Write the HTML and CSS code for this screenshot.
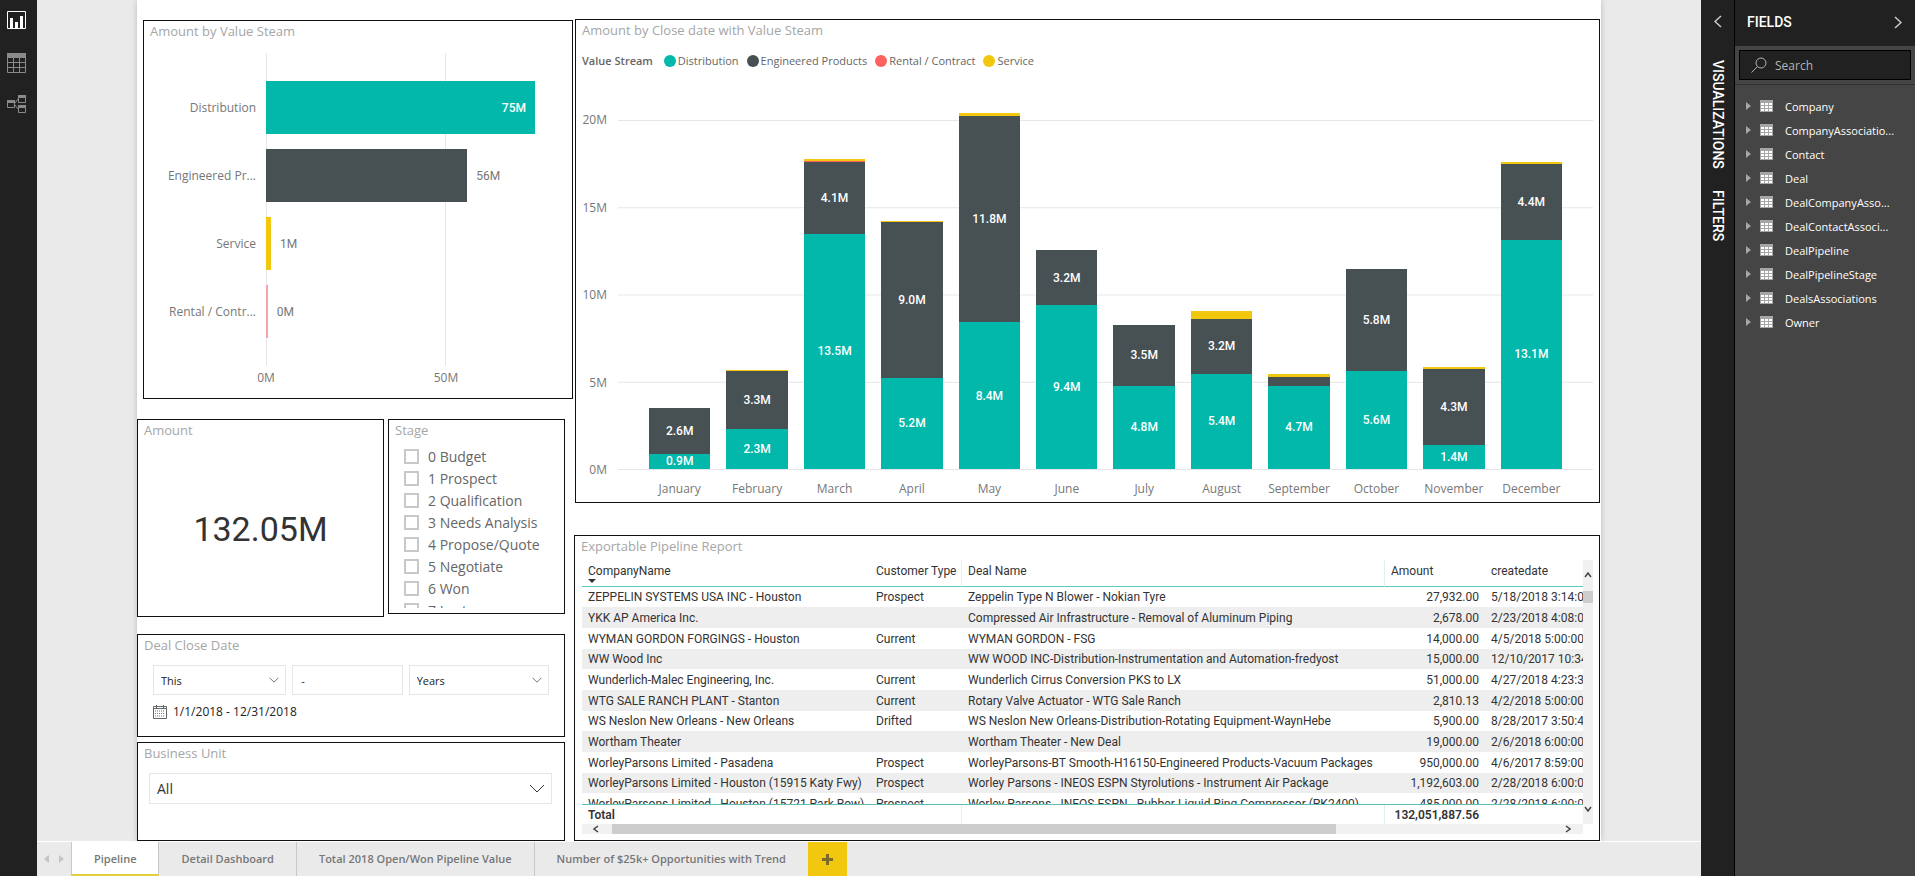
FILE: index.html
```html
<!DOCTYPE html>
<html lang="en">
<head>
	<meta charset="utf-8">
	<title>Pipeline</title>
	<link rel="stylesheet" href="styles.css">
</head>
<body>
<svg class="defs" width="0" height="0">
	<symbol id="down" viewBox="0 0 16 9"><path d="M1 1l7 7 7-7" fill="none" stroke="currentColor"/></symbol>
	<symbol id="table" viewBox="0 0 13 12">
		<path d="M0 0h13v12H0z" fill="#a6a6a6"/>
		<path d="M1 3h3v2H1zM5 3h3v2H5zM9 3h3v2H9zM1 6h3v2H1zM5 6h3v2H5zM9 6h3v2H9zM1 9h3v2H1zM5 9h3v2H5zM9 9h3v2H9z" fill="#fff"/>
	</symbol>
</svg>

<div class="app">
	<nav class="rail">
		<a href="#report" class="active" aria-label="Report">
			<svg width="20" height="19" viewBox="0 0 20 19"><path d="M.5.5h18v17H.5z" fill="none" stroke="currentColor"/><path d="M3 7h3v11H3zM8 11h3v7H8zM13 5h3v13h-3z" fill="currentColor"/></svg>
		</a>
		<a href="#data" aria-label="Data">
			<svg width="20" height="20" viewBox="0 0 20 20"><path d="M0 0h19v5H0z" fill="currentColor"/><path d="M.5 4v15.500h18V4M.5 9.500h18M.5 14.500h18M6.500 5v14M12.500 5v14" fill="none" stroke="currentColor"/></svg>
		</a>
		<a href="#model" aria-label="Relationships">
			<svg width="20" height="19" viewBox="0 0 20 19"><path d="M.5 5.500h7v7h-7zM11.500.5h7v7h-7zM11.500 10.500h7v7h-7zM8 8l3-4M8 10l3 4" fill="none" stroke="currentColor"/><path d="M0 5h8v3H0zM11 0h8v3h-8zM11 10h8v3h-8z" fill="currentColor"/></svg>
		</a>
	</nav>

	<main class="main">
		<div class="canvas">
			<div class="page">
				<div class="left">
					<section class="card by-stream">
						<h2>Amount by Value Steam</h2>
						<div class="bar-chart">
							<div class="categories">
								<span>Distribution</span>
								<span>Engineered Pr...</span>
								<span>Service</span>
								<span>Rental / Contr...</span>
							</div>
							<div class="bar-plot">
								<div class="row"><div class="bar dist" style="width: 93.4%">75M</div></div>
								<div class="row"><div class="bar eng" style="width: 69.9%"></div><span>56M</span></div>
								<div class="row"><div class="bar serv" style="width: 1.7%"></div><span>1M</span></div>
								<div class="row"><div class="bar rent-light" style="width: 0.6%"></div><span>0M</span></div>
							</div>
							<div class="bar-axis"><span>0M</span><span>50M</span></div>
						</div>
					</section>

					<div class="pair">
						<section class="card amount">
							<h2>Amount</h2>
							<p>132.05M</p>
						</section>
						<section class="card stage">
							<h2>Stage</h2>
							<div class="stages">
								<label><input type="checkbox">0 Budget</label>
								<label><input type="checkbox">1 Prospect</label>
								<label><input type="checkbox">2 Qualification</label>
								<label><input type="checkbox">3 Needs Analysis</label>
								<label><input type="checkbox">4 Propose/Quote</label>
								<label><input type="checkbox">5 Negotiate</label>
								<label><input type="checkbox">6 Won</label>
								<label><input type="checkbox">7 Lost</label>
							</div>
						</section>
					</div>

					<section class="card close-date">
						<h2>Deal Close Date</h2>
						<div class="date-row">
							<div class="select">
								<select aria-label="Period"><option>This</option><option>Last</option><option>Next</option></select>
								<svg width="10" height="6"><use href="#down"/></svg>
							</div>
							<input type="text" value="-" aria-label="Count">
							<div class="select">
								<select aria-label="Unit"><option>Years</option><option>Months</option><option>Days</option></select>
								<svg width="10" height="6"><use href="#down"/></svg>
							</div>
						</div>
						<div class="range">
							<svg width="14" height="14" viewBox="0 0 14 14"><path d="M.5 1.500h13v12H.5zM0 3.500h14M3.500 0v3M10.500 0v3" fill="none" stroke="#666"/><path d="M2 6h10M2 8.500h10M2 11h10" stroke="#777" stroke-dasharray="1 1"/></svg>
							<span>1/1/2018 - 12/31/2018</span>
						</div>
					</section>

					<section class="card unit">
						<h2>Business Unit</h2>
						<div class="select">
							<select aria-label="Business Unit"><option>All</option></select>
							<svg width="16" height="9"><use href="#down"/></svg>
						</div>
					</section>
				</div>

				<div class="right">
					<section class="card by-date">
						<h2>Amount by Close date with Value Steam</h2>
						<div class="legend">
							<b>Value Stream</b>
							<span><i class="dist"></i>Distribution</span>
							<span><i class="eng"></i>Engineered Products</span>
							<span><i class="rent"></i>Rental / Contract</span>
							<span><i class="serv"></i>Service</span>
						</div>
						<div class="column-chart">
							<div class="y-axis"><span>20M</span><span>15M</span><span>10M</span><span>5M</span><span>0M</span></div>
							<div class="column-plot">
								<div class="col">
									<div class="eng" style="height: 13.05%">2.6M</div>
									<div class="dist" style="height: 4.4%">0.9M</div>
								</div>
								<div class="col">
									<div class="serv" style="height: 0.5%"></div>
									<div class="eng" style="height: 16.4%">3.3M</div>
									<div class="dist" style="height: 11.6%">2.3M</div>
								</div>
								<div class="col">
									<div class="serv" style="height: 0.55%"></div>
									<div class="rent" style="height: 0.25%"></div>
									<div class="eng" style="height: 20.6%">4.1M</div>
									<div class="dist" style="height: 67.4%">13.5M</div>
								</div>
								<div class="col">
									<div class="serv" style="height: 0.2%"></div>
									<div class="eng" style="height: 44.75%">9.0M</div>
									<div class="dist" style="height: 26.15%">5.2M</div>
								</div>
								<div class="col">
									<div class="serv" style="height: 0.75%"></div>
									<div class="eng" style="height: 59.1%">11.8M</div>
									<div class="dist" style="height: 42.1%">8.4M</div>
								</div>
								<div class="col">
									<div class="serv" style="height: 0.15%"></div>
									<div class="eng" style="height: 15.7%">3.2M</div>
									<div class="dist" style="height: 46.95%">9.4M</div>
								</div>
								<div class="col">
									<div class="eng" style="height: 17.45%">3.5M</div>
									<div class="dist" style="height: 23.85%">4.8M</div>
								</div>
								<div class="col">
									<div class="serv" style="height: 2.3%"></div>
									<div class="eng" style="height: 15.75%">3.2M</div>
									<div class="dist" style="height: 27.3%">5.4M</div>
								</div>
								<div class="col">
									<div class="serv" style="height: 0.8%"></div>
									<div class="eng" style="height: 2.6%"></div>
									<div class="dist" style="height: 23.8%">4.7M</div>
								</div>
								<div class="col">
									<div class="eng" style="height: 29.1%">5.8M</div>
									<div class="dist" style="height: 28.15%">5.6M</div>
								</div>
								<div class="col">
									<div class="serv" style="height: 0.75%"></div>
									<div class="eng" style="height: 21.55%">4.3M</div>
									<div class="dist" style="height: 7%">1.4M</div>
								</div>
								<div class="col">
									<div class="serv" style="height: 0.55%"></div>
									<div class="eng" style="height: 21.85%">4.4M</div>
									<div class="dist" style="height: 65.65%">13.1M</div>
								</div>
							</div>
							<div class="months">
								<span>January</span><span>February</span><span>March</span><span>April</span><span>May</span><span>June</span>
								<span>July</span><span>August</span><span>September</span><span>October</span><span>November</span><span>December</span>
							</div>
						</div>
					</section>

					<section class="card report">
						<h2>Exportable Pipeline Report</h2>
						<div class="grid">
							<div class="grid-body">
								<div class="rows">
									<table>
										<colgroup><col class="c-company"><col class="c-type"><col class="c-deal"><col class="c-amount"><col class="c-created"></colgroup>
										<thead>
											<tr><th>CompanyName<i class="sort"></i></th><th>Customer Type</th><th>Deal Name</th><th>Amount</th><th>createdate</th></tr>
										</thead>
										<tbody>
											<tr><td>ZEPPELIN SYSTEMS USA INC - Houston</td><td>Prospect</td><td>Zeppelin Type N Blower - Nokian Tyre</td><td>27,932.00</td><td>5/18/2018 3:14:01 PM</td></tr>
											<tr><td>YKK AP America Inc.</td><td></td><td>Compressed Air Infrastructure - Removal of Aluminum Piping</td><td>2,678.00</td><td>2/23/2018 4:08:08 PM</td></tr>
											<tr><td>WYMAN GORDON FORGINGS - Houston</td><td>Current</td><td>WYMAN GORDON - FSG</td><td>14,000.00</td><td>4/5/2018 5:00:00</td></tr>
											<tr><td>WW Wood Inc</td><td></td><td>WW WOOD INC-Distribution-Instrumentation and Automation-fredyost</td><td>15,000.00</td><td>12/10/2017 10:34</td></tr>
											<tr><td>Wunderlich-Malec Engineering, Inc.</td><td>Current</td><td>Wunderlich Cirrus Conversion PKS to LX</td><td>51,000.00</td><td>4/27/2018 4:23:31 PM</td></tr>
											<tr><td>WTG SALE RANCH PLANT - Stanton</td><td>Current</td><td>Rotary Valve Actuator - WTG Sale Ranch</td><td>2,810.13</td><td>4/2/2018 5:00:00</td></tr>
											<tr><td>WS Neslon New Orleans - New Orleans</td><td>Drifted</td><td>WS Neslon New Orleans-Distribution-Rotating Equipment-WaynHebe</td><td>5,900.00</td><td>8/28/2017 3:50:48 PM</td></tr>
											<tr><td>Wortham Theater</td><td></td><td>Wortham Theater - New Deal</td><td>19,000.00</td><td>2/6/2018 6:00:00</td></tr>
											<tr><td>WorleyParsons Limited - Pasadena</td><td>Prospect</td><td>WorleyParsons-BT Smooth-H16150-Engineered Products-Vacuum Packages</td><td>950,000.00</td><td>4/6/2017 8:59:00</td></tr>
											<tr><td>WorleyParsons Limited - Houston (15915 Katy Fwy)</td><td>Prospect</td><td>Worley Parsons - INEOS ESPN Styrolutions - Instrument Air Package</td><td>1,192,603.00</td><td>2/28/2018 6:00:00</td></tr>
											<tr><td>WorleyParsons Limited - Houston (15721 Park Row)</td><td>Prospect</td><td>Worley Parsons - INEOS ESPN - Rubber-Liquid Ring Compressor (PK2400)</td><td>485,000.00</td><td>2/28/2018 6:00:00</td></tr>
										</tbody>
									</table>
								</div>
								<div class="total">
									<table>
										<colgroup><col class="c-company"><col class="c-type"><col class="c-deal"><col class="c-amount"><col class="c-created"></colgroup>
										<tbody><tr><td>Total</td><td></td><td></td><td>132,051,887.56</td><td></td></tr></tbody>
									</table>
								</div>
							</div>
							<div class="vscroll">
								<svg width="8" height="6" viewBox="0 0 8 6"><path d="M1 5l3-4 3 4" fill="none" stroke="#444" stroke-width="1.500"/></svg>
								<div class="thumb"></div>
								<svg width="8" height="6" viewBox="0 0 8 6"><path d="M1 1l3 4 3-4" fill="none" stroke="#444" stroke-width="1.500"/></svg>
							</div>
							<div class="hscroll">
								<svg width="6" height="8" viewBox="0 0 6 8"><path d="M5 1L1 4l4 3" fill="none" stroke="#444" stroke-width="1.500"/></svg>
								<div class="track"><div class="thumb"></div></div>
								<svg width="6" height="8" viewBox="0 0 6 8"><path d="M1 1l4 3-4 3" fill="none" stroke="#444" stroke-width="1.500"/></svg>
							</div>
						</div>
					</section>
				</div>
			</div>
		</div>

		<nav class="tabs">
			<div class="arrows">
				<svg width="5" height="8" viewBox="0 0 5 8"><path d="M5 0v8L0 4z" fill="#c4c4c4"/></svg>
				<svg width="5" height="8" viewBox="0 0 5 8"><path d="M0 0v8l5-4z" fill="#c4c4c4"/></svg>
			</div>
			<a href="#pipeline" class="active">Pipeline</a>
			<a href="#detail">Detail Dashboard</a>
			<a href="#total">Total 2018 Open/Won Pipeline Value</a>
			<a href="#number">Number of $25k+ Opportunities with Trend</a>
			<button type="button" aria-label="New page">
				<svg width="11" height="11" viewBox="0 0 11 11"><path d="M4 0h3v4h4v3H7v4H4V7H0V4h4z" fill="#7a6a2c"/></svg>
			</button>
		</nav>
	</main>

	<aside class="collapsed">
		<button type="button" aria-label="Expand"><svg width="8" height="13" viewBox="0 0 8 13"><path d="M7 1L1 6.500 7 12" fill="none" stroke="currentColor" stroke-width="1.500"/></svg></button>
		<span>VISUALIZATIONS</span>
		<span>FILTERS</span>
	</aside>

	<aside class="fields">
		<header>
			<h1>FIELDS</h1>
			<button type="button" aria-label="Collapse"><svg width="8" height="13" viewBox="0 0 8 13"><path d="M1 1l6 5.500L1 12" fill="none" stroke="currentColor" stroke-width="1.500"/></svg></button>
		</header>
		<div class="search">
			<label>
				<svg width="16" height="16" viewBox="0 0 16 16"><circle cx="10" cy="6" r="5" fill="none" stroke="currentColor"/><path d="M6.500 9.500L.5 15.500" stroke="currentColor"/></svg>
				<input type="text" placeholder="Search" aria-label="Search">
			</label>
		</div>
		<ul>
			<li><i></i><svg width="13" height="12"><use href="#table"/></svg>Company</li>
			<li><i></i><svg width="13" height="12"><use href="#table"/></svg>CompanyAssociatio...</li>
			<li><i></i><svg width="13" height="12"><use href="#table"/></svg>Contact</li>
			<li><i></i><svg width="13" height="12"><use href="#table"/></svg>Deal</li>
			<li><i></i><svg width="13" height="12"><use href="#table"/></svg>DealCompanyAsso...</li>
			<li><i></i><svg width="13" height="12"><use href="#table"/></svg>DealContactAssoci...</li>
			<li><i></i><svg width="13" height="12"><use href="#table"/></svg>DealPipeline</li>
			<li><i></i><svg width="13" height="12"><use href="#table"/></svg>DealPipelineStage</li>
			<li><i></i><svg width="13" height="12"><use href="#table"/></svg>DealsAssociations</li>
			<li><i></i><svg width="13" height="12"><use href="#table"/></svg>Owner</li>
		</ul>
	</aside>
</div>
</body>
</html>
```
FILE: styles.css
```css
* {
	box-sizing: border-box;
}

body {
	margin: 0;
	font-family: "Open Sans", "Noto Sans", sans-serif;
	font-size: 12px;
	color: #333;
}

h1, h2, p, ul {
	margin: 0;
	padding: 0;
}

svg {
	display: block;
	flex: none;
}

button, input, select {
	font: inherit;
	color: inherit;
	margin: 0;
	padding: 0;
	border: 0;
	border-radius: 0;
	background: none;
}

.defs {
	position: absolute;
}

.app {
	display: flex;
	min-height: 100vh;
}

/* left rail */
.rail {
	flex: none;
	width: 37px;
	padding: 11px 0 0 7px;
	background: #212121;
}

.rail a {
	display: block;
	height: 42px;
	color: #8a8a8a;
}

.rail a.active {
	color: #fff;
}

.main {
	flex: 1;
	min-width: 0;
	display: flex;
	flex-direction: column;
	background: #eaeaea;
}

.canvas {
	flex: 1;
	display: flex;
	padding: 0 100px;
	border-bottom: 1px solid #fff;
	overflow: hidden;
}

.page {
	flex: 1;
	min-width: 0;
	display: grid;
	grid-template-columns: 436fr 1026fr;
	gap: 1px;
	padding: 19px 1px 0 0;
	background: #fff;
	box-shadow: 0 0 6px rgba(0, 0, 0, 0.2);
}

.left, .right {
	display: flex;
	flex-direction: column;
	min-width: 0;
}

/* cards */
.card {
	border: 1px solid #111;
	background: #fff;
	min-width: 0;
}

.card h2 {
	padding: 0 6px 1px;
	font-size: 13px;
	font-weight: 400;
	line-height: 20px;
	color: #a6a6a6;
}

.dist { background: #01b8aa; }
.eng { background: #475053; }
.rent { background: #fd625e; }
.rent-light { background: #f5a3a8; }
.serv { background: #f2c80f; }

/* amount by value stream */
.by-stream {
	margin: 1px 0 20px 6px;
	padding-bottom: 12px;
}

.bar-chart {
	display: grid;
	grid-template-columns: 112px 1fr;
	column-gap: 10px;
	padding: 11px 18px 0 0;
	color: #777;
}

.categories, .bar-plot {
	display: grid;
	grid-auto-rows: 53px;
	gap: 15px;
	padding: 28px 0;
}

.categories {
	line-height: 54px;
	text-align: right;
	white-space: nowrap;
}

.bar-plot {
	background:
		linear-gradient(#e6e6e6, #e6e6e6) 0 0 / 1px 100% no-repeat,
		linear-gradient(#e6e6e6, #e6e6e6) 62.5% 0 / 1px 100% no-repeat;
	font-family: Roboto, sans-serif;
}

.row {
	display: flex;
	gap: 9px;
	line-height: 54px;
	white-space: nowrap;
}

.bar {
	flex: none;
	padding-right: 9px;
	color: #fff;
	font-weight: 500;
	text-align: right;
}

.bar:empty {
	padding: 0;
}

.bar-axis {
	grid-column: 2;
	display: grid;
	grid-template-columns: 62.5% 1fr;
	padding-top: 4px;
	line-height: 16px;
}

.bar-axis span {
	width: 40px;
	margin-left: -20px;
	text-align: center;
}

/* amount + stage */
.pair {
	display: grid;
	grid-template-columns: 247fr 177fr;
	gap: 4px;
	margin: 0 8px 17px 0;
}

.amount {
	display: flex;
	flex-direction: column;
}

.amount p {
	flex: 1;
	display: flex;
	align-items: center;
	justify-content: center;
	font-family: Roboto, sans-serif;
	font-size: 34px;
}

.stage {
	margin-bottom: 3px;
	padding-bottom: 5px;
}

.stages {
	height: 163px;
	margin: 4px 0 0 15px;
	overflow: hidden;
	font-size: 14px;
	color: #666;
}

.stages label {
	display: flex;
	align-items: center;
	gap: 9px;
	height: 22px;
	white-space: nowrap;
}

.stages input {
	appearance: none;
	width: 15px;
	height: 15px;
	border: 2px solid #c8c8c8;
}

/* slicers */
.close-date {
	margin: 0 8px 5px 0;
	padding-bottom: 15px;
}

.date-row {
	display: grid;
	grid-template-columns: 133fr 110fr 140fr;
	gap: 6px;
	padding: 9px 15px 0 15px;
	font-size: 11px;
	color: #222;
}

.date-row input {
	width: 100%;
	height: 30px;
	padding: 0 8px;
	border: 1px solid #e6e6e6;
}

.select {
	display: grid;
	align-items: center;
}

.select select {
	grid-area: 1 / 1;
	appearance: none;
	width: 100%;
	height: 30px;
	padding: 0 7px;
	border: 1px solid #e6e6e6;
}

.select svg {
	grid-area: 1 / 1;
	justify-self: end;
	margin-right: 7px;
	pointer-events: none;
}

.range {
	display: flex;
	align-items: center;
	gap: 6px;
	padding: 8px 0 0 15px;
	line-height: 18px;
	color: #222;
}

.unit {
	flex: 1;
	margin-right: 8px;
	min-height: 99px;
}

.unit .select {
	margin: 9px 12px 0 11px;
	font-size: 14px;
}

.unit select {
	height: 31px;
}

/* amount by close date */
.by-date {
	margin: 0 0 32px 1px;
	padding-bottom: 5px;
}

.legend {
	display: flex;
	gap: 8px;
	padding: 12px 6px 0;
	font-size: 11px;
	line-height: 16px;
	color: #666;
}

.legend b {
	margin-right: 3px;
	font-weight: 600;
}

.legend span {
	display: flex;
	align-items: center;
	gap: 2px;
}

.legend i {
	width: 12px;
	height: 12px;
	border-radius: 50%;
}

.column-chart {
	display: grid;
	grid-template-columns: 31px 1fr;
	grid-template-rows: 350px auto;
	column-gap: 11px;
	padding: 51px 6px 0 0;
	color: #777;
}

.y-axis {
	display: flex;
	flex-direction: column;
	justify-content: space-between;
	margin: -8px 0;
	line-height: 16px;
	text-align: right;
}

.column-plot {
	display: grid;
	grid-template-columns: repeat(12, 1fr);
	padding: 0 23px;
	border-bottom: 1px solid #e6e6e6;
	background: linear-gradient(#e6e6e6 1px, transparent 1px) 0 0 / 100% 25%;
}

.col {
	display: flex;
	flex-direction: column;
	justify-content: flex-end;
	height: 349px;
	padding: 0 8px;
	font-family: Roboto, sans-serif;
	font-weight: 500;
	color: #fff;
}

.col div {
	flex: none;
	display: flex;
	align-items: center;
	justify-content: center;
}

.months {
	grid-column: 2;
	display: grid;
	grid-template-columns: repeat(12, 1fr);
	padding: 11px 23px 0;
	line-height: 16px;
	text-align: center;
}

/* pipeline report */
.report {
	flex: 1;
}

.grid {
	display: grid;
	grid-template-columns: 1fr 10px;
	margin: 3px 6px 6px 7px;
}

.grid-body {
	min-width: 0;
}

.rows {
	height: 244px;
	overflow: hidden;
}

.total {
	overflow: hidden;
	border-top: 1px solid #5cbfb5;
	font-weight: 600;
}

table {
	width: 1040px;
	table-layout: fixed;
	border-spacing: 0;
	font-family: Roboto, sans-serif;
}

.c-company { width: 288px; }
.c-type { width: 92px; }
.c-deal { width: 423px; }
.c-amount { width: 100px; }
.c-created { width: 137px; }

th, td {
	padding: 0 6px;
	text-align: left;
	white-space: nowrap;
}

th {
	height: 27px;
	padding-top: 3px;
	border-bottom: 1px solid #5cccc1;
	font-weight: 400;
	line-height: 16px;
	vertical-align: top;
}

td {
	padding-top: 1px;
	line-height: 20px;
}

.sort {
	display: block;
	width: 8px;
	height: 4px;
	background: #333;
	clip-path: polygon(0 0, 100% 0, 50% 100%);
}

th:nth-child(2), th:nth-child(3),
.total td:nth-child(2), .total td:nth-child(3) {
	border-right: 1px solid #e3efee;
}

.rows tr:nth-child(3n+1) td {
	line-height: 19px;
}

.rows tr:nth-child(even) td {
	background: #eee;
}

.total td {
	padding-top: 2px;
	line-height: 17px;
}

td:nth-child(4) {
	text-align: right;
}

.vscroll {
	display: flex;
	flex-direction: column;
	align-items: center;
	padding: 12px 0;
	background: #f1f1f1;
}

.vscroll .thumb {
	width: 10px;
	height: 12px;
	margin: 13px 0 auto;
	background: #cdcdcd;
}

.hscroll {
	display: flex;
	align-items: center;
	height: 10px;
	padding: 0 12px 0 11px;
	background: #f1f1f1;
}

.hscroll .track {
	flex: 1;
	padding: 0 13px;
}

.hscroll .thumb {
	width: 77%;
	height: 10px;
	background: #cdcdcd;
}

/* page tabs */
.tabs {
	flex: none;
	display: flex;
	height: 34px;
	font-size: 11px;
	font-weight: 600;
	line-height: 34px;
}

.arrows {
	display: flex;
	align-items: center;
	justify-content: center;
	gap: 10px;
	width: 35px;
	border-right: 1px solid #c8c8c8;
}

.tabs a {
	padding: 0 22px;
	border-right: 1px solid #c8c8c8;
	color: #777;
	text-decoration: none;
	white-space: nowrap;
}

.tabs a.active {
	border-bottom: 2px solid #e3cf3a;
	background: #fff;
}

.tabs a:last-of-type {
	border-right: 0;
}

.tabs button {
	display: grid;
	place-items: center;
	width: 39px;
	background: #f2c80f;
}

/* collapsed panes */
.collapsed {
	flex: none;
	display: flex;
	flex-direction: column;
	align-items: center;
	width: 34px;
	padding-top: 15px;
	border-right: 1px solid #000;
	background: #212121;
	color: #fff;
}

.collapsed button {
	margin-bottom: 32px;
	color: #ccc;
}

.collapsed span {
	margin-bottom: 21px;
	font-family: Roboto, sans-serif;
	font-size: 14px;
	font-weight: 500;
	writing-mode: vertical-rl;
}

/* fields pane */
.fields {
	flex: none;
	width: 180px;
	background: #454545;
	color: #fff;
}

.fields header {
	display: flex;
	align-items: center;
	justify-content: space-between;
	height: 46px;
	padding: 0 13px 2px 12px;
	background: #212121;
}

.fields header button {
	color: #ccc;
}

.fields h1 {
	font-family: Roboto, sans-serif;
	font-size: 14px;
	font-weight: 500;
}

.search {
	padding: 4px;
	border-bottom: 1px solid #303030;
}

.search label {
	display: flex;
	align-items: center;
	gap: 8px;
	height: 30px;
	padding: 0 11px;
	border: 1px solid #000;
	background: #212121;
	color: #b3b3b3;
}

.search input {
	flex: 1;
	min-width: 0;
}

.search input::placeholder {
	color: #b3b3b3;
}

.fields ul {
	padding-top: 9px;
	font-size: 11px;
	list-style: none;
}

.fields li {
	display: flex;
	align-items: center;
	height: 24px;
	padding-left: 11px;
	white-space: nowrap;
}

.fields li i {
	width: 5px;
	height: 8px;
	background: #a6a6a6;
	clip-path: polygon(0 0, 100% 50%, 0 100%);
}

.fields li svg {
	margin: 0 12px 0 9px;
}
```
